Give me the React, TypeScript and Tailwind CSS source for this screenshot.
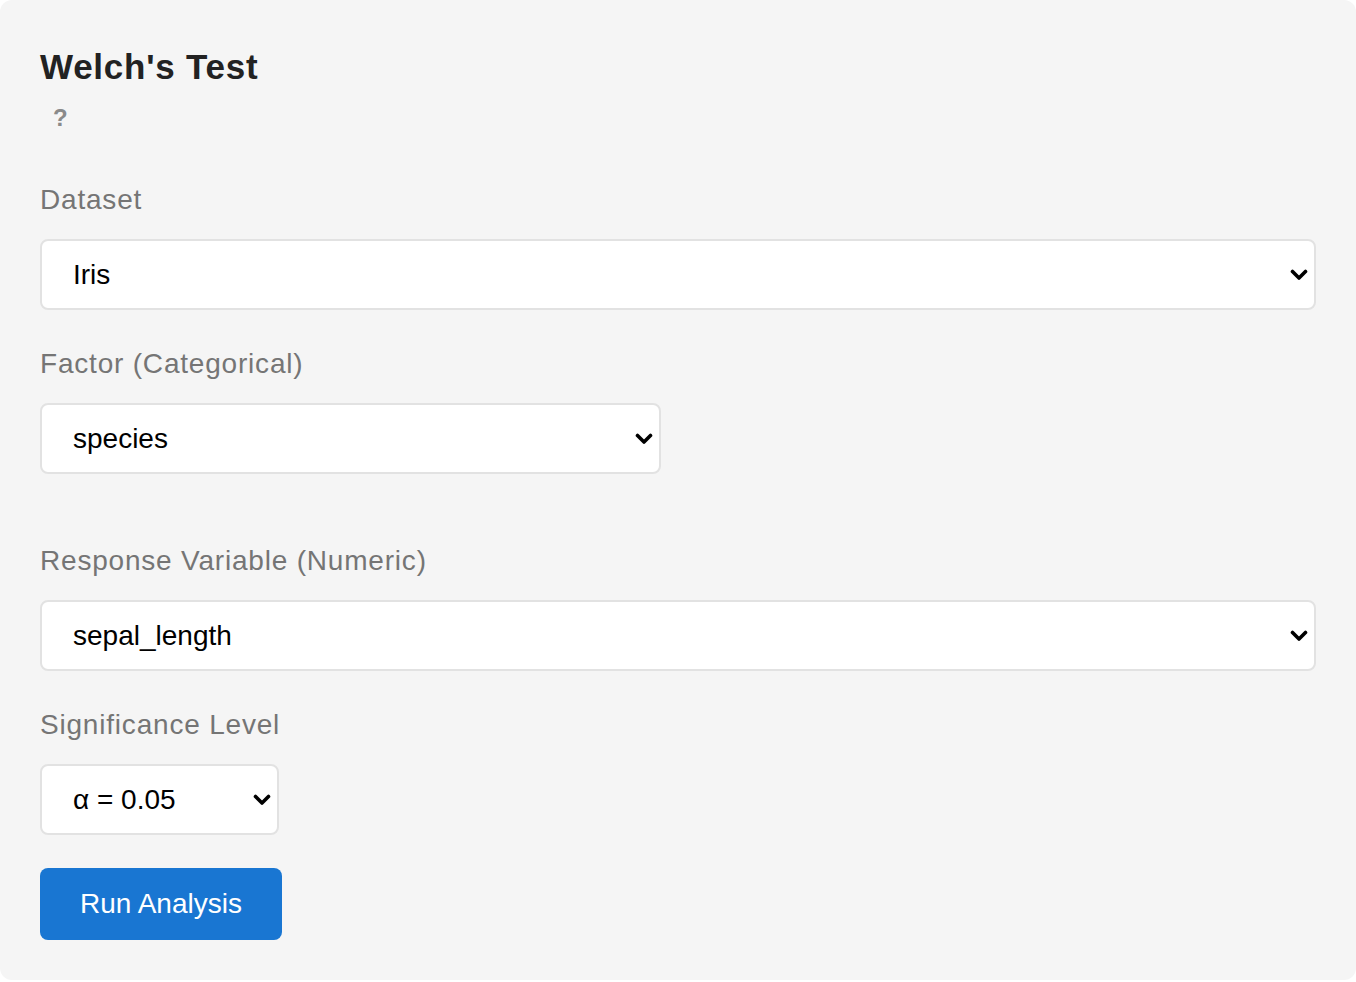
import React, { useState } from 'react';

const font = { fontFamily: '"Liberation Sans", Arial, Helvetica, sans-serif' };

const Chevron: React.FC = () => (
  <svg
    className="pointer-events-none absolute right-[8px] top-1/2 -translate-y-1/2"
    width="18"
    height="12"
    viewBox="0 0 18 12"
    fill="none"
  >
    <polyline points="2.5,2.5 9,9 15.5,2.5" stroke="#000" strokeWidth="3.6" strokeLinecap="round" strokeLinejoin="round" />
  </svg>
);

type FieldProps = {
  label: string;
  value: string;
  options: string[];
  widthClass: string;
  onChange: (v: string) => void;
};

const SelectField: React.FC<FieldProps> = ({ label, value, options, widthClass, onChange }) => (
  <div className="pb-[33px]">
    <label className="block text-[28px] leading-[42px] tracking-[0.8px] text-[#757575] mb-[18px]">{label}</label>
    <div className={`relative ${widthClass}`}>
      <select
        value={value}
        onChange={e => onChange(e.target.value)}
        className="block h-[71px] w-full appearance-none rounded-[8px] border-2 border-[#e2e2e2] bg-white pl-[31px] pr-[40px] text-[28px] text-black outline-none"
        style={font}
      >
        {options.map(o => (
          <option key={o} value={o}>{o}</option>
        ))}
      </select>
      <Chevron />
    </div>
  </div>
);

const App: React.FC = () => {
  const [dataset, setDataset] = useState('Iris');
  const [factor, setFactor] = useState('species');
  const [response, setResponse] = useState('sepal_length');
  const [alpha, setAlpha] = useState('α = 0.05');

  return (
    <div className="min-h-screen bg-white" style={font}>
      <div className="rounded-[12px] bg-[#f5f5f5] px-[40px] pt-[46px] pb-[40px]">
        <h2 className="text-[35px] leading-[42px] tracking-[0.75px] font-bold text-[#222]">Welch's Test</h2>
        <div className="mt-[15px] mb-[46px]">
          <button className="ml-[13px] text-[24px] leading-[30px] font-bold text-[#8a8a8a]">?</button>
        </div>

        <SelectField label="Dataset" value={dataset} options={['Iris', 'Titanic', 'Tips']} widthClass="w-full" onChange={setDataset} />
        <div className="pb-[33px]">
          <SelectField label="Factor (Categorical)" value={factor} options={['species']} widthClass="w-[621px]" onChange={setFactor} />
        </div>
        <SelectField
          label="Response Variable (Numeric)"
          value={response}
          options={['sepal_length', 'sepal_width', 'petal_length', 'petal_width']}
          widthClass="w-full"
          onChange={setResponse}
        />
        <SelectField
          label="Significance Level"
          value={alpha}
          options={['α = 0.01', 'α = 0.05', 'α = 0.10']}
          widthClass="w-[239px]"
          onChange={setAlpha}
        />

        <button className="h-[72px] w-[242px] rounded-[8px] bg-[#1976d2] text-[28px] text-white">
          Run Analysis
        </button>
      </div>
    </div>
  );
};

export default App;
